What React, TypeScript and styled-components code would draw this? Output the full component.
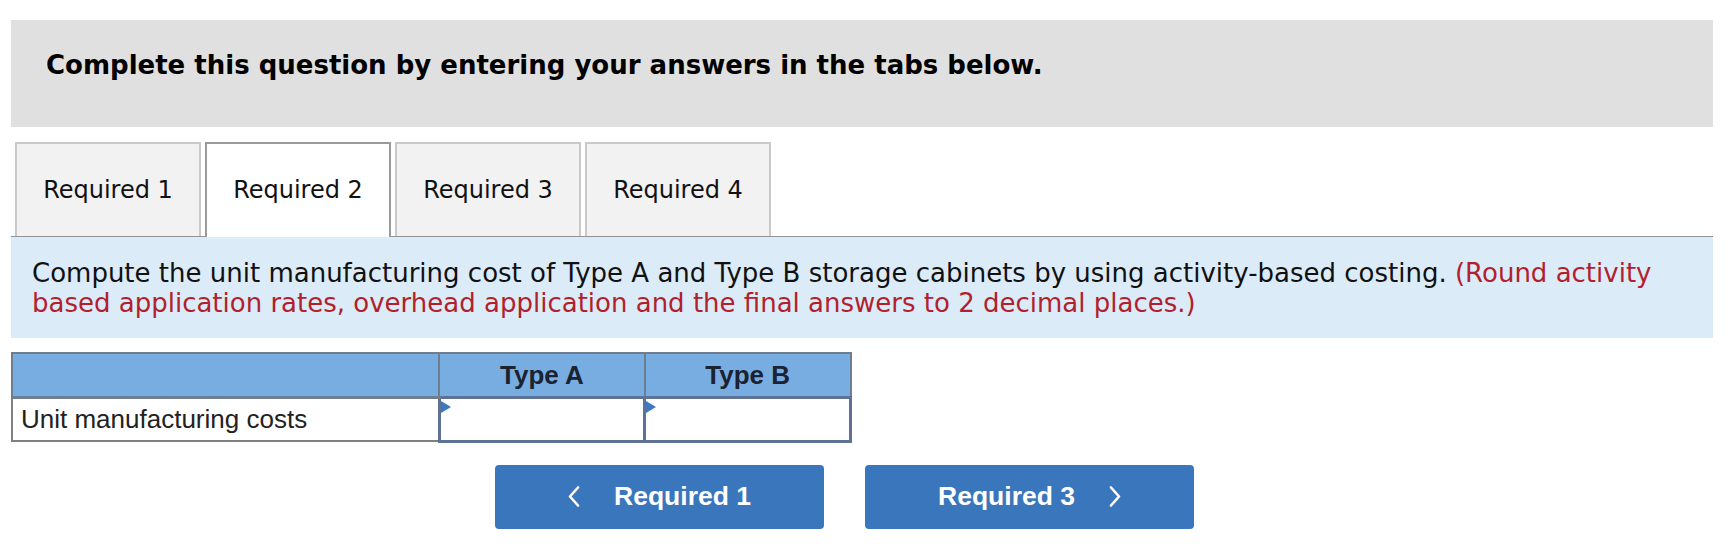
import React from 'react';
import styled, { createGlobalStyle } from 'styled-components';

const GlobalStyle = createGlobalStyle`
  body {
    margin: 0;
    background: #ffffff;
  }
`;

const Page = styled.div`
  padding: 20px 15px 0 11px;
`;

const Banner = styled.div`
  height: 107px;
  box-sizing: border-box;
  background: #e0e0e0;
  padding: 30px 35px 0;
`;

const Heading = styled.h2`
  margin: 0;
  font: bold 26px/30px 'DejaVu Sans', Verdana, sans-serif;
  color: #000000;
`;

const TabRow = styled.div`
  margin-top: 15px;
  display: flex;
  align-items: flex-start;
  gap: 4px;
  padding-left: 4px;
  height: 94px;
  border-bottom: 1px solid #8d959b;
`;

const Tab = styled.div<{ $active?: boolean }>`
  width: 186px;
  height: ${(p) => (p.$active ? '95px' : '94px')};
  box-sizing: border-box;
  display: flex;
  align-items: center;
  justify-content: center;
  padding-bottom: ${(p) => (p.$active ? '1px' : '0')};
  font: 24px 'DejaVu Sans', Verdana, sans-serif;
  color: #111111;
  background: ${(p) => (p.$active ? '#ffffff' : '#f2f2f2')};
  border: 2px solid ${(p) => (p.$active ? '#9a9a9a' : '#c9c9c9')};
  border-bottom: none;
  position: relative;
  z-index: 1;
`;

const Prompt = styled.div`
  background: #dcebf8;
  padding: 21px 21px 20px;
  font: 26px/30px 'DejaVu Sans', Verdana, sans-serif;
  color: #111111;
`;

const Note = styled.span`
  color: #b21f2d;
`;

const Table = styled.table`
  margin-top: 14px;
  border-collapse: collapse;
  width: 841px;
  font-family: 'Liberation Sans', Arial, sans-serif;
`;

const HeadCell = styled.th<{ $w: number }>`
  width: ${(p) => p.$w}px;
  height: 42px;
  padding: 0;
  background: #78ade2;
  border: 2px solid #6f7d90;
  font-weight: bold;
  font-size: 26px;
  color: #1b2230;
  text-align: center;
`;

const LabelCell = styled.td`
  height: 41px;
  padding: 0 0 0 8px;
  border: 2px solid #808080;
  border-top: 3px solid #6f7d90;
  font-size: 26px;
  color: #222222;
`;

const InputCell = styled.td`
  position: relative;
  padding: 0;
  border: 3px solid #5d7294;
  background: #ffffff;
`;

const Marker = styled.span`
  position: absolute;
  top: 2px;
  left: 0;
  width: 0;
  height: 0;
  border-top: 6px solid transparent;
  border-bottom: 6px solid transparent;
  border-left: 10px solid #3d78c1;
`;

const Field = styled.input`
  width: 100%;
  height: 39px;
  box-sizing: border-box;
  border: none;
  outline: none;
  background: transparent;
  font: 22px 'Liberation Sans', Arial, sans-serif;
  text-align: right;
`;

const NavRow = styled.div`
  margin-top: 22px;
  display: flex;
  gap: 41px;
  padding-left: 484px;
`;

const NavButton = styled.button`
  width: 329px;
  height: 64px;
  border: none;
  border-radius: 4px;
  background: #3a76bb;
  color: #ffffff;
  font: bold 26.5px 'Liberation Sans', Arial, sans-serif;
  display: flex;
  align-items: center;
  justify-content: center;
  gap: 34px;
  cursor: pointer;
`;

const Chevron = ({ dir }: { dir: 'left' | 'right' }) => (
  <svg width="12" height="21" viewBox="0 0 12 21">
    <path
      d={dir === 'left' ? 'M10 1.5 L2 10.5 L10 19.5' : 'M2 1.5 L10 10.5 L2 19.5'}
      stroke="#ffffff"
      strokeWidth="2.6"
      fill="none"
      strokeLinecap="round"
      strokeLinejoin="round"
    />
  </svg>
);

const tabs = ['Required 1', 'Required 2', 'Required 3', 'Required 4'];

export default function App() {
  return (
    <Page>
      <GlobalStyle />
      <Banner>
        <Heading>Complete this question by entering your answers in the tabs below.</Heading>
      </Banner>
      <TabRow>
        {tabs.map((t, i) => (
          <Tab key={t} $active={i === 1}>
            {t}
          </Tab>
        ))}
      </TabRow>
      <Prompt>
        Compute the unit manufacturing cost of Type A and Type B storage cabinets by using activity-based
        costing.{' '}
        <Note>
          (Round activity based application rates, overhead application and the final answers to 2 decimal
          places.)
        </Note>
      </Prompt>
      <Table>
        <thead>
          <tr>
            <HeadCell $w={429} />
            <HeadCell $w={206}>Type A</HeadCell>
            <HeadCell $w={206}>Type B</HeadCell>
          </tr>
        </thead>
        <tbody>
          <tr>
            <LabelCell>Unit manufacturing costs</LabelCell>
            <InputCell>
              <Marker />
              <Field />
            </InputCell>
            <InputCell>
              <Marker />
              <Field />
            </InputCell>
          </tr>
        </tbody>
      </Table>
      <NavRow>
        <NavButton>
          <Chevron dir="left" />
          Required 1
        </NavButton>
        <NavButton>
          Required 3
          <Chevron dir="right" />
        </NavButton>
      </NavRow>
    </Page>
  );
}
